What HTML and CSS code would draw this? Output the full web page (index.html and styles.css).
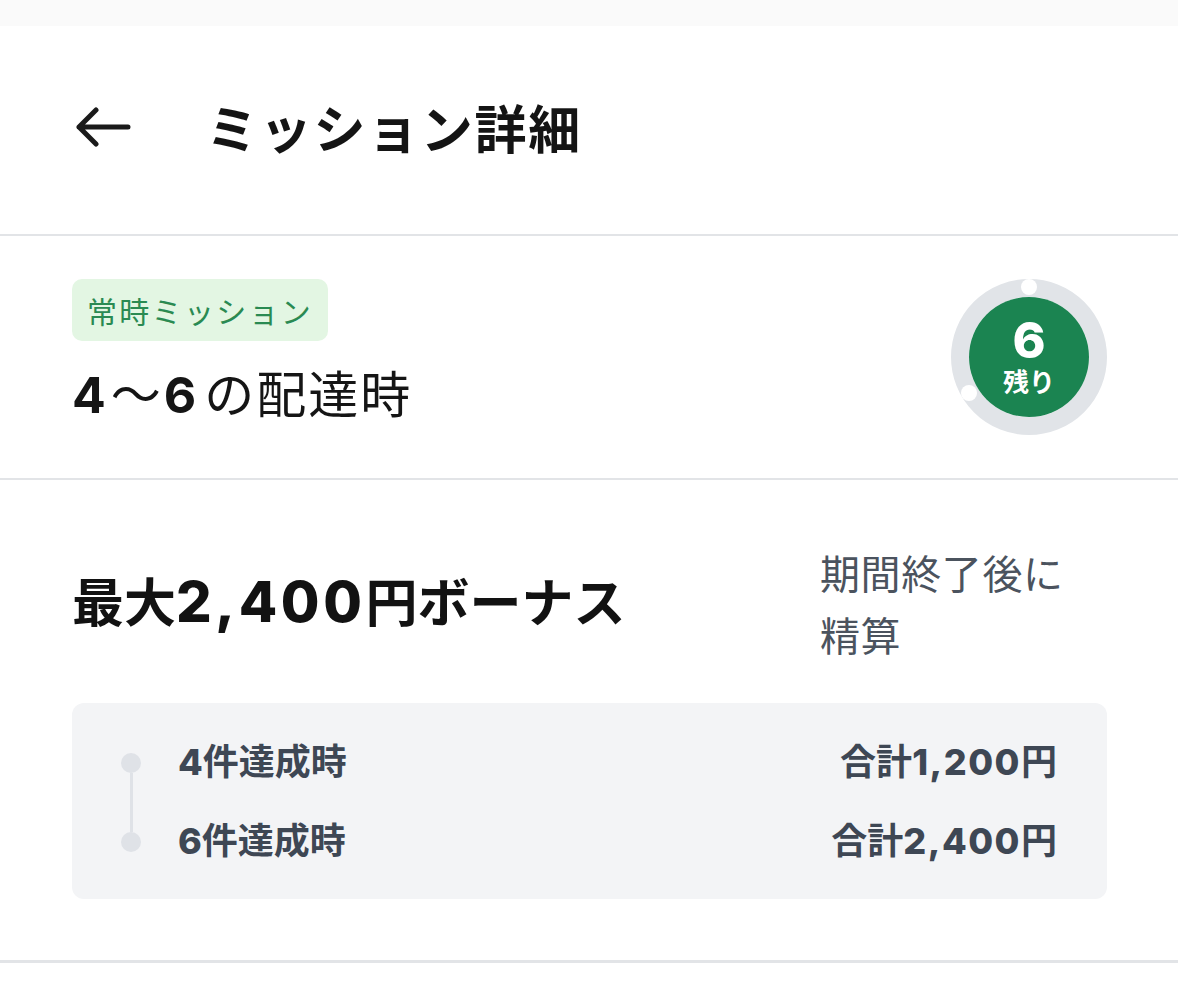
FILE: index.html
```html
<!DOCTYPE html>
<html lang="ja">
<head>
<meta charset="utf-8">
<title>ミッション詳細</title>
<link rel="stylesheet" href="styles.css">
</head>
<body>
<div class="status"></div>
<header class="header">
  <svg class="back" viewBox="0 0 56 40" width="56" height="40" aria-hidden="true">
    <path d="M53 20 H4 M21 3 L4 20 L21 37" fill="none" stroke="#1a1a1a" stroke-width="5" stroke-linecap="round" stroke-linejoin="round"/>
  </svg>
  <h1 class="title">ミッション詳細</h1>
</header>
<section class="mission">
  <div class="mission-left">
    <span class="badge">常時ミッション</span>
    <p class="mission-title"><span class="num">4</span><span class="wave">〜</span><span class="num six">6</span>の配達時</p>
  </div>
  <div class="remain">
    <svg class="ring" viewBox="0 0 156 156" width="156" height="156" aria-hidden="true">
      <circle cx="78" cy="78" r="69" fill="none" stroke="#e1e4e8" stroke-width="18"/>
      <circle cx="78" cy="78" r="60" fill="#1b8451"/>
      <circle cx="78" cy="8" r="8" fill="#ffffff"/>
      <circle cx="18" cy="114" r="8" fill="#ffffff"/>
    </svg>
    <div class="remain-text">
      <span class="remain-num">6</span>
      <span class="remain-label">残り</span>
    </div>
  </div>
</section>
<section class="bonus">
  <div class="bonus-top">
    <h2 class="bonus-title">最大<span class="num">2,400</span>円ボーナス</h2>
    <p class="settle">期間終了後に精算</p>
  </div>
  <div class="steps">
    <div class="timeline">
      <span class="dot"></span>
      <span class="line"></span>
      <span class="dot"></span>
    </div>
    <div class="step-rows">
      <div class="step-row"><span><span class="num">4</span>件達成時</span><span>合計<span class="amt">1,200</span>円</span></div>
      <div class="step-row"><span><span class="num">6</span>件達成時</span><span>合計<span class="amt">2,400</span>円</span></div>
    </div>
  </div>
</section>
</body>
</html>
```
FILE: styles.css
```css
* { box-sizing: border-box; }
html, body { margin: 0; padding: 0; background: #ffffff; }
body {
  width: 1178px;
  font-family: "Inter", "Noto Sans CJK JP", sans-serif;
  color: #111111;
}
.status { height: 26px; background: #fafafa; }
.header {
  height: 210px;
  display: flex;
  align-items: center;
  padding-left: 75px;
  border-bottom: 2px solid #e2e4e7;
}
.back { display: block; margin-right: 75px; margin-top: -6px; }
.title {
  margin: 0;
  font-family: "Noto Sans CJK JP", sans-serif;
  font-size: 52px;
  font-weight: 700;
  line-height: 1;
  color: #141414;
  margin-top: -6px;
  letter-spacing: 1.7px;
}
.mission {
  height: 244px;
  display: flex;
  justify-content: space-between;
  align-items: center;
  padding: 0 71px 0 72px;
  border-bottom: 2px solid #e2e4e7;
}
.mission-left { display: flex; flex-direction: column; align-items: flex-start; margin-top: -6px; }
.badge {
  display: inline-block;
  height: 62px;
  line-height: 62px;
  padding: 0 15px 0 15px;
  border-radius: 10px;
  background: #e3f6e3;
  color: #2a8a52;
  font-family: "Noto Sans CJK JP", sans-serif;
  font-size: 30px;
  letter-spacing: 2.3px;
}
.mission-title {
  margin: 19px 0 0;
  font-size: 50px;
  line-height: 70px;
  font-weight: 400;
  color: #151515;
  letter-spacing: 2px;
}
.mission-title .num { font-weight: 700; letter-spacing: 0; }
.mission-title .wave { margin: 0 3px 0 5px; letter-spacing: 0; }
.mission-title .six { margin-right: 8px; }
.remain { position: relative; width: 156px; height: 156px; }
.ring { display: block; }
.remain-text {
  position: absolute;
  inset: 0;
  display: flex;
  flex-direction: column;
  align-items: center;
  justify-content: center;
  color: #ffffff;
}
.remain-num { font-size: 50px; font-weight: 800; line-height: 44px; }
.remain-label { font-family: "Noto Sans CJK JP", sans-serif; font-size: 26px; font-weight: 700; line-height: 30px; margin-top: 4px; }
.bonus {
  padding: 61px 71px 61px 72px;
  border-bottom: 3px solid #e2e4e7;
}
.bonus-top { display: flex; align-items: center; justify-content: space-between; }
.bonus-title {
  margin: 0;
  font-size: 52px;
  font-weight: 700;
  line-height: 70px;
  color: #121212;
}
.bonus-title .num { font-size: 56px; font-weight: 800; letter-spacing: 3.6px; }
.settle {
  margin: 0 37px 0 0;
  width: 250px;
  font-family: "Noto Sans CJK JP", sans-serif;
  font-size: 40px;
  line-height: 62px;
  color: #4b535e;
  letter-spacing: 0.6px;
}
.steps {
  margin-top: 38px;
  display: flex;
  background: #f3f4f6;
  border-radius: 12px;
  padding: 36px 50px 41px 49px;
}
.timeline {
  width: 20px;
  display: flex;
  flex-direction: column;
  align-items: center;
  margin: 4px 37px -4px 0;
}
.dot { width: 20px; height: 20px; border-radius: 50%; background: #dfe2e7; margin: 10px 0; flex: none; }
.line { width: 3px; flex: 1; background: #dfe2e7; margin: -10px 0; }
.step-rows { flex: 1; display: flex; flex-direction: column; gap: 39px; }
.step-row {
  display: flex;
  justify-content: space-between;
  align-items: center;
  height: 40px;
  font-size: 36px;
  font-weight: 700;
  color: #3e4754;
}
.step-row .num { font-weight: 800; }
.amt { font-weight: 800; letter-spacing: 1.5px; }
```
